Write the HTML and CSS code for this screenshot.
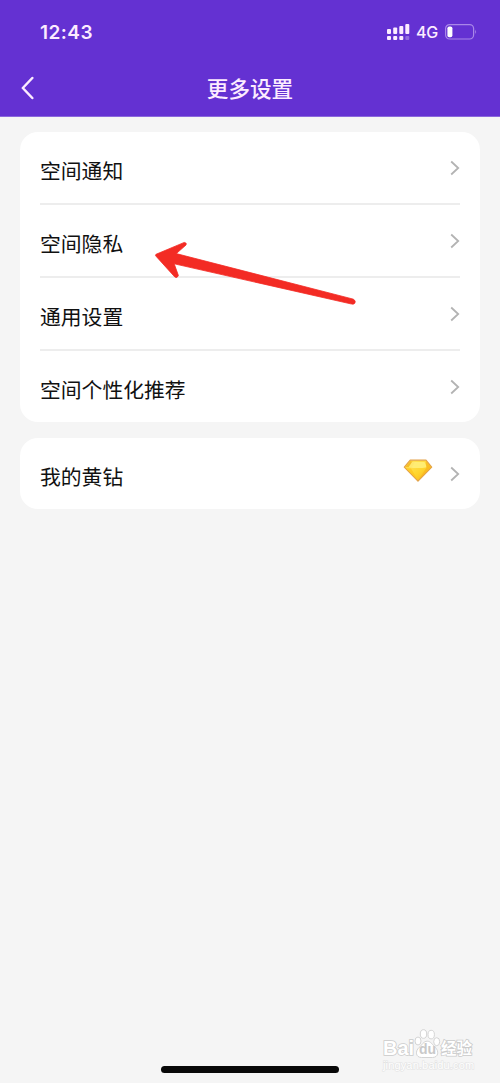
FILE: index.html
```html
<!DOCTYPE html>
<html lang="zh-CN">
<head>
<meta charset="utf-8">
<title>更多设置</title>
<link rel="stylesheet" href="styles.css">
</head>
<body>
<div class="screen">
  <header class="header">
    <div class="status">
      <span class="time">12:43</span>
      <div class="indicators">
        <svg class="signal" width="23" height="17" viewBox="0 0 23 17" fill="#fcecff">
          <rect x="0" y="5" width="4" height="5" rx="1"/><rect x="6.2" y="3.5" width="4" height="6.5" rx="1"/><rect x="12.3" y="2" width="4" height="8" rx="1"/><rect x="18.3" y="0" width="4" height="10" rx="1"/>
          <rect x="0" y="12" width="4" height="4" rx="1"/><rect x="6.2" y="12" width="4" height="4" rx="1"/><rect x="12.3" y="12" width="4" height="4" rx="1"/><rect x="18.3" y="12" width="4" height="4" rx="1" opacity=".3"/>
        </svg>
        <span class="network">4G</span>
        <svg class="battery" width="32" height="16" viewBox="0 0 32 16" fill="none">
          <rect x=".6" y=".6" width="28" height="14.4" rx="4" stroke="#a987e8" stroke-width="1.2"/>
          <rect x="2.4" y="2.4" width="5" height="10.8" rx="1.8" fill="#fff"/>
          <path d="M30.2 5.5Q32 7.8 30.2 10Z" fill="#a987e8"/>
        </svg>
      </div>
    </div>
    <nav class="nav">
      <svg class="back" width="14" height="24" viewBox="0 0 14 24"><path d="M12.3 2L2.8 12l9.5 10" fill="none" stroke="#fcecff" stroke-width="2.5" stroke-linecap="round" stroke-linejoin="round"/></svg>
      <h1 class="title">更多设置</h1>
    </nav>
  </header>
  <main class="content">
    <section class="card">
      <div class="row"><span class="label">空间通知</span><svg class="chevron" viewBox="0 0 10 16"><path d="M1.2 1.5L8.2 8l-7 6.5"/></svg></div>
      <div class="row"><span class="label">空间隐私</span><svg class="chevron" viewBox="0 0 10 16"><path d="M1.2 1.5L8.2 8l-7 6.5"/></svg></div>
      <div class="row"><span class="label">通用设置</span><svg class="chevron" viewBox="0 0 10 16"><path d="M1.2 1.5L8.2 8l-7 6.5"/></svg></div>
      <div class="row"><span class="label">空间个性化推荐</span><svg class="chevron" viewBox="0 0 10 16"><path d="M1.2 1.5L8.2 8l-7 6.5"/></svg></div>
    </section>
    <section class="card">
      <div class="row row-single">
        <span class="label">我的黄钻</span>
        <svg class="diamond" width="30" height="24" viewBox="0 0 30 24">
          <defs><linearGradient id="gold" x1="0" y1="0" x2="1" y2="1"><stop offset="0" stop-color="#ffe968"/><stop offset=".55" stop-color="#ffd52e"/><stop offset="1" stop-color="#f4a91d"/></linearGradient></defs>
          <path d="M7.2 1.2H23L28.7 8.2 15 22.2 1.3 8.2Z" fill="url(#gold)" stroke="#e3a24b" stroke-width="1.2" stroke-linejoin="round"/>
          <path d="M7.5 2L1.8 8.2 9 8 12 3.4Z" fill="#f6bd29"/>
          <path d="M9 3H21.5L24 8.2Q15 10 5.5 8.2Z" fill="#fff07c" opacity=".85"/>
          <path d="M23 2.2L28 8.2 15 21.5 23.3 9Z" fill="#f8b51f" opacity=".75"/>
          <path d="M2.6 9L15 21.3 8 9.4Z" fill="#ffc51c" opacity=".7"/>
        </svg>
        <svg class="chevron" viewBox="0 0 10 16"><path d="M1.2 1.5L8.2 8l-7 6.5"/></svg>
      </div>
    </section>
  </main>
  <svg class="arrow" width="204" height="68" viewBox="153 238 204 68">
    <path d="M156 254.3L184.3 242.4Q187.2 242.8 186 245L176.3 253.6 353.5 299.2Q356.2 301 354.8 303.2Q353.8 304.8 350.5 303.8L174.2 263.8 178.4 275.5Q177.4 278.6 174.8 277L156 256.2Q155 255 156 254.3Z" fill="#f32b24" stroke="#f32b24" stroke-width=".8" stroke-linejoin="round"/>
  </svg>
  <div class="watermark">
    <div class="brand">
      <span class="bai">Bai</span>
      <span class="paw">
        <svg class="paw-print" width="27" height="30" viewBox="0 0 27 30" fill="#fff" stroke="#cfcfcf" stroke-width=".9">
          <ellipse cx="4" cy="12" rx="3" ry="4"/><ellipse cx="9.5" cy="5" rx="3.2" ry="4.3"/><ellipse cx="17.2" cy="5.6" rx="3.2" ry="4.3"/><ellipse cx="22.7" cy="12.7" rx="3" ry="4"/>
          <path d="M13.2 12.2C17 12.2 18.5 16 21.2 18.3C25.3 22 24.5 28.5 18.5 28.5H7.5C1.5 28.5 1 22 5.2 18.4C8 16 9.6 12.2 13.2 12.2Z"/>
        </svg>
        <span class="du">du</span>
      </span>
      <span class="jingyan">经验</span>
    </div>
    <span class="url">jingyan.baidu.com</span>
  </div>
  <div class="home-bar"></div>
</div>
</body>
</html>
```
FILE: styles.css
```css
* { box-sizing: border-box; }
body { margin: 0; background: #f5f5f5; font-family: Inter, "Noto Sans CJK SC", sans-serif; }
.screen { position: relative; width: 500px; height: 1083px; overflow: hidden; background: #f5f5f5; }
.header { height: 117px; background: #6431d2; color: #fcecff; border-bottom: 1px solid #8a67dc; }
.status { height: 60px; padding: 4px 24px 0 40px; display: flex; align-items: center; justify-content: space-between; }
.time { font-size: 19px; font-weight: 600; letter-spacing: .45px; }
.indicators { display: flex; align-items: center; margin-right: -1px; }
.signal { margin-right: 6px; }
.network { font-size: 16px; font-weight: 500; width: 23px; letter-spacing: -.3px; }
.battery { margin-left: 6px; }
.nav { height: 56px; display: grid; grid-template-columns: 60px 1fr 60px; align-items: center; }
.back { margin-left: 20px; }
.title { margin: 0; padding-top: 2px; text-align: center; font-size: 21.6px; line-height: 32px; font-weight: 500; }
.content { padding: 15px 20px; display: flex; flex-direction: column; gap: 16px; }
.card { background: #fff; border-radius: 18px; padding: 0 20px; }
.row { height: 73px; display: flex; align-items: center; border-bottom: 2px solid #ededed; }
.row:last-child { height: 71px; border-bottom: 0; }
.label { flex: 1; color: #111; font-size: 20.8px; line-height: 30px; padding-top: 8px; }
.chevron { width: 10px; height: 16px; }
.chevron path { fill: none; stroke: #b3b3b3; stroke-width: 1.8; }
.diamond { margin-right: 17px; margin-top: -5px; }
.arrow { position: absolute; left: 153px; top: 238px; }
.watermark { position: absolute; left: 383px; top: 1029px; width: 94px; }
.brand { display: flex; align-items: flex-end; height: 30px; color: #fff; -webkit-text-stroke: 1.6px #cbcbcb; paint-order: stroke fill; }
.bai { font: 700 20px/18px "Liberation Sans", sans-serif; width: 31px; height: 20px; }
.paw { position: relative; width: 27px; height: 30px; }
.paw-print { paint-order: normal; }
.du { position: absolute; left: 5px; top: 12px; font: 700 14px/16px "Liberation Sans", sans-serif; color: #c9c9c9; -webkit-text-stroke: 0; }
.jingyan { font: 700 15.5px/20px "Noto Sans CJK SC", sans-serif; height: 22px; white-space: nowrap; }
.url { display: block; color: #fff; -webkit-text-stroke: 1.2px #e3e3e3; paint-order: stroke fill; font: 11px/13px "Liberation Sans", sans-serif; letter-spacing: .15px; }
.home-bar { position: absolute; left: 161px; top: 1066px; width: 178px; height: 7px; border-radius: 4px; background: #080808; }
```
